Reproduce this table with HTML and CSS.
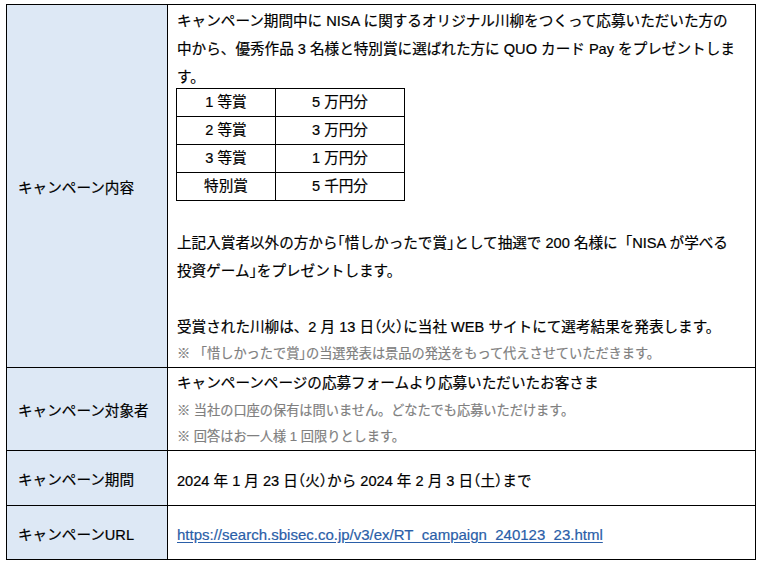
FILE: index.html
```html
<!DOCTYPE html>
<html lang="ja">
<head>
<meta charset="utf-8">
<title>キャンペーン概要</title>
<link rel="stylesheet" href="styles.css">
</head>
<body>
<table class="sheet">
  <colgroup><col class="col-label"><col class="col-body"></colgroup>
  <tr class="row-content">
    <td class="label">キャンペーン内容</td>
    <td class="body">
      <p class="line">キャンペーン期間中に NISA に関するオリジナル川柳をつくって応募いただいた方の<br>中から、優秀作品 3 名様と特別賞に選ばれた方に QUO カード Pay をプレゼントしま<br>す。</p>
      <table class="prize">
        <tr><td class="rank">1 等賞</td><td class="amount">5 万円分</td></tr>
        <tr><td class="rank">2 等賞</td><td class="amount">3 万円分</td></tr>
        <tr><td class="rank">3 等賞</td><td class="amount">1 万円分</td></tr>
        <tr><td class="rank">特別賞</td><td class="amount">5 千円分</td></tr>
      </table>
      <p class="line gap">上記入賞者以外の方から<span class="hw">「</span>惜しかったで賞<span class="hw">」</span>として抽選で 200 名様に「NISA が学べる<br>投資ゲーム<span class="hw">」</span>をプレゼントします。</p>
      <p class="line gap">受賞された川柳は、2 月 13 日<span class="hw">（</span>火<span class="hw">）</span>に当社 WEB サイトにて選考結果を発表します。</p>
      <p class="note note-tight">※ 「惜しかったで賞<span class="hw">」</span>の当選発表は景品の発送をもって代えさせていただきます。</p>
    </td>
  </tr>
  <tr class="row-target">
    <td class="label">キャンペーン対象者</td>
    <td class="body flush">
      <p class="line">キャンペーンページの応募フォームより応募いただいたお客さま</p>
      <p class="note">※ 当社の口座の保有は問いません。どなたでも応募いただけます。</p>
      <p class="note note-tight">※ 回答はお一人様 1 回限りとします。</p>
    </td>
  </tr>
  <tr class="row-period">
    <td class="label">キャンペーン期間</td>
    <td class="body middle"><p class="line">2024 年 1 月 23 日<span class="hw">（</span>火<span class="hw">）</span>から 2024 年 2 月 3 日<span class="hw">（</span>土<span class="hw">）</span>まで</p></td>
  </tr>
  <tr class="row-url">
    <td class="label">キャンペーンURL</td>
    <td class="body middle"><p class="line"><a class="link" href="#">https://search.sbisec.co.jp/v3/ex/RT_campaign_240123_23.html</a></p></td>
  </tr>
</table>
</body>
</html>
```

FILE: styles.css
```css
html, body {
  margin: 0;
  padding: 0;
  background: #ffffff;
}

.sheet {
  border-collapse: collapse;
  table-layout: fixed;
  width: 749px;
  margin: 4px 0 0 6px;
  font-family: "Liberation Sans", "Noto Sans CJK JP", sans-serif;
  font-size: 14.6px;
  color: #000;
  -webkit-text-stroke: 0.2px currentColor;
}

.col-label { width: 161px; }
.col-body { width: 588px; }

.sheet > tbody > tr > td {
  border: 1px solid #000;
  padding: 0;
}

.sheet p {
  margin: 0;
}

.label {
  background: #dde8f5;
  vertical-align: middle;
  padding: 1px 0 0 11px !important;
  white-space: nowrap;
}

.body {
  vertical-align: top;
  padding: 2px 6px 0 9px !important;
}

.body.flush {
  padding-top: 1px !important;
}

.body.middle {
  vertical-align: middle;
  padding-top: 5px !important;
}

.line {
  line-height: 28px;
}

.gap {
  margin-top: 28px !important;
}

.note {
  font-size: 13.2px;
  line-height: 27px;
  color: #7f7f7f;
}

.note-tight {
  line-height: 26px;
}

.hw {
  font-feature-settings: "halt";
}

.prize {
  border-collapse: collapse;
  table-layout: fixed;
  width: 228px;
  margin: -3px 0 0 -1px;
}

.prize td {
  border: 1px solid #000;
  height: 27px;
  padding: 0;
  text-align: center;
  line-height: 27px;
}

.rank { width: 98px; }
.amount { width: 128px; }

.row-content { height: 363px; }
.row-target { height: 83px; }
.row-period { height: 55px; }
.row-url { height: 54px; }

.link {
  font-size: 15px;
  color: #2a5ea8;
  text-decoration: underline;
  text-underline-offset: 2px;
}
```
